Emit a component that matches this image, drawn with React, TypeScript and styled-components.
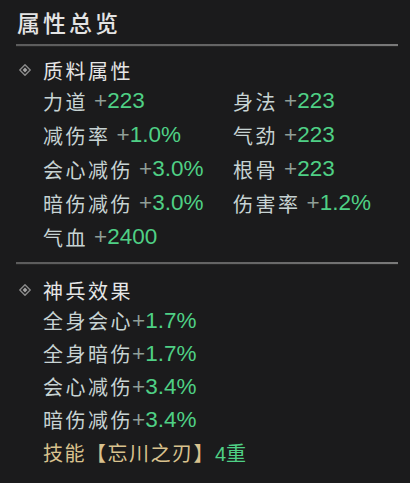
import styled, { createGlobalStyle } from "styled-components";

const GlobalStyle = createGlobalStyle`
    html, body {
        margin: 0;
        padding: 0;
        background: #1b1b1c;
    }
`;

type Stat = { name: string; value: string };

const baseStats: Stat[] = [
    { name: "力道", value: "223" },
    { name: "身法", value: "223" },
    { name: "减伤率", value: "1.0%" },
    { name: "气劲", value: "223" },
    { name: "会心减伤", value: "3.0%" },
    { name: "根骨", value: "223" },
    { name: "暗伤减伤", value: "3.0%" },
    { name: "伤害率", value: "1.2%" },
    { name: "气血", value: "2400" },
];

const weaponStats: Stat[] = [
    { name: "全身会心", value: "1.7%" },
    { name: "全身暗伤", value: "1.7%" },
    { name: "会心减伤", value: "3.4%" },
    { name: "暗伤减伤", value: "3.4%" },
];

function Diamond() {
    return (
        <svg width="12" height="12" viewBox="0 0 12 12">
            <path d="M6 0.8 L11.2 6 L6 11.2 L0.8 6 Z" fill="none" stroke="#8a8a8a" strokeWidth="1.4" strokeLinejoin="round" />
            <path d="M6 3.6 L8.4 6 L6 8.4 L3.6 6 Z" fill="#a3a3a3" />
        </svg>
    );
}

function StatLine({ stat, tight }: { stat: Stat; tight?: boolean }) {
    return (
        <Line>
            <Label>{stat.name}</Label>
            <Value $tight={tight}>
                <Plus>+</Plus>
                {stat.value}
            </Value>
        </Line>
    );
}

function App() {
    return (
        <>
            <GlobalStyle />
            <Panel>
                <Title>属性总览</Title>
                <Divider />

                <SectionHeader>
                    <Diamond />
                    <SectionName>质料属性</SectionName>
                </SectionHeader>
                <StatGrid>
                    {baseStats.map((s) => (
                        <StatLine key={s.name} stat={s} />
                    ))}
                </StatGrid>

                <Divider $gap={8} />

                <SectionHeader $top={11}>
                    <Diamond />
                    <SectionName>神兵效果</SectionName>
                </SectionHeader>
                <EffectList>
                    {weaponStats.map((s) => (
                        <StatLine key={s.name} stat={s} tight />
                    ))}
                    <Line>
                        <Skill>技能【忘川之刃】</Skill>
                        <SkillLevel>4重</SkillLevel>
                    </Line>
                </EffectList>
            </Panel>
        </>
    );
}

// Styling
const Panel = styled.div`
    width: 410px;
    height: 483px;
    box-sizing: border-box;
    padding: 6px 12px 0 16px;
    background: #1b1b1c;
    overflow: hidden;
    font-family: "Noto Sans CJK SC", sans-serif;
`;

const Title = styled.div`
    height: 32px;
    line-height: 32px;
    padding-left: 1px;
    font-size: 23px;
    font-weight: 500;
    letter-spacing: 3px;
    color: #e4e4e4;
`;

const Divider = styled.div<{ $gap?: number }>`
    margin-top: ${(p) => p.$gap ?? 6}px;
    height: 2px;
    background: linear-gradient(to right, #5c5c5c, #666 60%, #7a7a7a);
    border-bottom: 1px solid #262626;
`;

const SectionHeader = styled.div<{ $top?: number }>`
    display: flex;
    align-items: center;
    gap: 12px;
    height: 28px;
    margin-top: ${(p) => p.$top ?? 9}px;
    padding-left: 3px;
`;

const SectionName = styled.span`
    font-size: 20px;
    letter-spacing: 2.5px;
    color: #e6e6e6;
`;

const StatGrid = styled.div`
    display: grid;
    grid-template-columns: 190px 1fr;
    grid-auto-rows: 34px;
    padding-left: 27px;
`;

const EffectList = styled.div`
    display: grid;
    grid-auto-rows: 33px;
    padding-left: 27px;
`;

const Line = styled.div`
    display: flex;
    align-items: center;
    white-space: nowrap;
`;

const Label = styled.span`
    font-size: 20px;
    letter-spacing: 2.5px;
    color: #c7d3d3;
`;

const Value = styled.span<{ $tight?: boolean }>`
    margin-left: ${(p) => (p.$tight ? -1 : 6)}px;
    font-family: "Liberation Sans", Arial, sans-serif;
    font-size: 22.5px;
    color: #4fd085;
`;

const Plus = styled.span`
    color: #8f9e96;
`;

const Skill = styled.span`
    font-size: 20px;
    letter-spacing: 1.5px;
    color: #d9c28e;
`;

const SkillLevel = styled.span`
    font-size: 20px;
    color: #4fd085;
    font-family: "Liberation Sans", "Noto Sans CJK SC", sans-serif;
`;

export default App;
